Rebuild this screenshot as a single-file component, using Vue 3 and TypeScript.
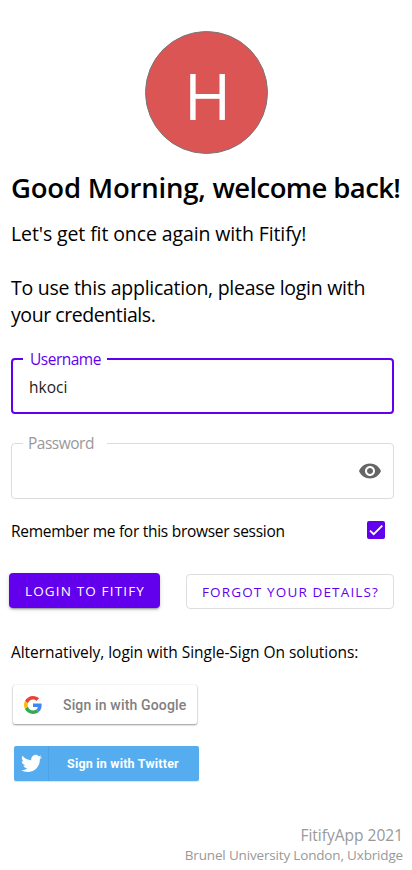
<script setup lang="ts">
import { ref } from 'vue'

const username = ref('hkoci')
const password = ref('')
const remember = ref(true)
const showPassword = ref(false)
</script>

<template>
  <main class="page">
    <div class="avatar"><span>H</span></div>
    <h1><span class="greeting">Good Morning, </span><span class="welcome">welcome back!</span></h1>
    <p class="intro first">Let's get fit once again with Fitify!</p>
    <p class="intro second"><span class="line-a">To use this application, please login with</span><br /><span class="line-b">your credentials.</span></p>

    <label class="field active">
      <span class="notch"><span>Username</span></span>
      <input v-model="username" type="text" spellcheck="false" />
    </label>

    <label class="field">
      <span class="notch"><span>Password</span></span>
      <input v-model="password" :type="showPassword ? 'text' : 'password'" />
      <svg class="eye" viewBox="0 0 24 24" @click.prevent="showPassword = !showPassword">
        <path d="M12 4.5C7 4.5 2.73 7.61 1 12c1.73 4.39 6 7.5 11 7.5s9.27-3.11 11-7.5c-1.73-4.39-6-7.5-11-7.5zM12 17c-2.76 0-5-2.24-5-5s2.24-5 5-5 5 2.24 5 5-2.24 5-5 5zm0-8c-1.66 0-3 1.34-3 3s1.34 3 3 3 3-1.34 3-3-1.34-3-3-3z" />
      </svg>
    </label>

    <div class="remember">
      <span>Remember me for this browser session</span>
      <button class="check" type="button" role="checkbox" :aria-checked="remember" @click="remember = !remember">
        <svg v-if="remember" viewBox="0 0 24 24"><path d="M1.73 12.91 8.1 19.28 22.79 4.59" /></svg>
      </button>
    </div>

    <div class="actions">
      <button class="login" type="button"><span>LOGIN TO FITIFY</span></button>
      <button class="forgot" type="button"><span>FORGOT YOUR DETAILS?</span></button>
    </div>

    <p class="alt">Alternatively, login with Single-Sign On solutions:</p>

    <button class="google" type="button">
      <svg viewBox="0 0 48 48">
        <path fill="#EA4335" d="M24 9.5c3.54 0 6.71 1.22 9.21 3.6l6.85-6.85C35.9 2.38 30.47 0 24 0 14.62 0 6.51 5.38 2.56 13.22l7.98 6.19C12.43 13.72 17.74 9.5 24 9.5z" />
        <path fill="#4285F4" d="M46.98 24.55c0-1.57-.15-3.09-.38-4.55H24v9.02h12.94c-.58 2.96-2.26 5.48-4.78 7.18l7.73 6c4.51-4.18 7.09-10.36 7.09-17.65z" />
        <path fill="#FBBC05" d="M10.53 28.59c-.48-1.45-.76-2.99-.76-4.59s.27-3.14.76-4.59l-7.98-6.19C.92 16.46 0 20.12 0 24c0 3.88.92 7.54 2.56 10.78l7.97-6.19z" />
        <path fill="#34A853" d="M24 48c6.48 0 11.93-2.13 15.89-5.81l-7.73-6c-2.15 1.45-4.92 2.3-8.16 2.3-6.26 0-11.57-4.22-13.47-9.91l-7.98 6.19C6.51 42.62 14.62 48 24 48z" />
      </svg>
      <span>Sign in with Google</span>
    </button>

    <button class="twitter" type="button">
      <i>
        <svg viewBox="0 0 24 24"><path d="M23.953 4.57a10 10 0 01-2.825.775 4.958 4.958 0 002.163-2.723c-.951.555-2.005.959-3.127 1.184a4.92 4.92 0 00-8.384 4.482C7.69 8.095 4.067 6.13 1.64 3.162a4.822 4.822 0 00-.666 2.475c0 1.71.87 3.213 2.188 4.096a4.904 4.904 0 01-2.228-.616v.06a4.923 4.923 0 003.946 4.827 4.996 4.996 0 01-2.212.085 4.936 4.936 0 004.604 3.417 9.867 9.867 0 01-6.102 2.105c-.39 0-.779-.023-1.17-.067a13.995 13.995 0 007.557 2.209c9.053 0 13.998-7.496 13.998-13.985 0-.21 0-.42-.015-.63A9.935 9.935 0 0024 4.59z" /></svg>
      </i>
      <span>Sign in with Twitter</span>
    </button>

    <footer>
      <div class="app-name"><span>FitifyApp 2021</span></div>
      <div class="place"><span>Brunel University London, Uxbridge</span></div>
    </footer>
  </main>
</template>

<style>
body {
  background: #fff;
}
</style>

<style scoped>
.page {
  box-sizing: border-box;
  height: 870px;
  padding: 31px 0 0 11px;
  display: flex;
  flex-direction: column;
  align-items: flex-start;
  overflow: hidden;
  white-space: nowrap;
  color: #000;
  font-family: "Open Sans", "Noto Sans", sans-serif;
}
button,
input {
  font: inherit;
  padding: 0;
  margin: 0;
  border: 0;
  background: none;
  outline: none;
}
p,
h1 {
  margin: 0;
}
.avatar {
  box-sizing: border-box;
  width: 123px;
  height: 123px;
  margin-left: 134px;
  padding-left: 2px;
  border: 1px solid #777;
  border-radius: 50%;
  background: #db5555;
  color: #fff;
  display: flex;
  justify-content: center;
  font-size: 64px;
  font-weight: 400;
  line-height: 128px;
}
h1 {
  margin-top: 16px;
  font-size: 27.5px;
  font-weight: 600;
  line-height: 36px;
  white-space: pre;
}
.greeting {
  letter-spacing: -0.2px;
}
.welcome {
  letter-spacing: -0.6px;
}
.intro {
  font-size: 19.5px;
  line-height: 27px;
}
.first {
  margin-top: 14px;
  letter-spacing: -0.11px;
}
.second {
  margin-top: 27px;
}
.line-a {
  letter-spacing: -0.27px;
}
.line-b {
  letter-spacing: -0.43px;
}
.field {
  position: relative;
  box-sizing: border-box;
  width: 383px;
  height: 56px;
  margin-top: 29px;
  padding: 0 11px 0 17px;
  border: 1px solid #dcdcdc;
  border-radius: 4px;
  display: flex;
  align-items: center;
  color: #999;
  font-size: 15.5px;
}
.active {
  margin-top: 30px;
  padding-left: 16px;
  border: 2px solid #6200ee;
  color: #6200ee;
}
.notch {
  position: absolute;
  top: -12px;
  left: 11px;
  box-sizing: border-box;
  width: 84px;
  padding-left: 5px;
  background: #fff;
  line-height: 23px;
  letter-spacing: -0.5px;
}
.active .notch {
  left: 10px;
  padding-left: 7px;
}
.field input {
  flex: 1;
  min-width: 0;
  height: 24px;
  margin-top: 1px;
  color: #222;
}
.eye {
  width: 24px;
  height: 24px;
  fill: #666;
}
.remember {
  width: 374px;
  margin-top: 20px;
  display: flex;
  justify-content: space-between;
  align-items: center;
  font-size: 15.5px;
  line-height: 24px;
  letter-spacing: -0.28px;
}
.check {
  width: 18px;
  height: 18px;
  margin-bottom: 2px;
  border-radius: 2px;
  background: #6200ee;
  display: flex;
  align-items: center;
  justify-content: center;
}
.check svg {
  width: 14px;
  height: 14px;
  fill: none;
  stroke: #fff;
  stroke-width: 3.12;
}
.actions {
  margin: 30px 0 0 -2px;
  display: flex;
  gap: 26px;
  font-size: 13.5px;
}
.login {
  width: 151px;
  height: 35px;
  padding: 0 0 0 1px;
  border-radius: 4px;
  background: #6200ee;
  color: #fff;
  box-shadow: 0 3px 1px -2px rgba(0, 0, 0, 0.2), 0 2px 2px rgba(0, 0, 0, 0.14), 0 1px 5px rgba(0, 0, 0, 0.12);
  letter-spacing: 1.15px;
}
.forgot {
  width: 208px;
  height: 35px;
  margin-top: 1px;
  padding-left: 1px;
  border: 1px solid #dedede;
  border-radius: 4px;
  color: #6200ee;
  letter-spacing: 1.15px;
}
.alt {
  margin-top: 31px;
  font-size: 15.5px;
  line-height: 24px;
  letter-spacing: -0.05px;
}
.google {
  width: 184px;
  height: 39px;
  margin: 21px 0 0 2px;
  border-radius: 2px;
  background: #fff;
  box-shadow: 0 1px 2px rgba(0, 0, 0, 0.4), 0 0 1px rgba(0, 0, 0, 0.2);
  display: flex;
  align-items: center;
  color: #808080;
  font-family: Roboto, sans-serif;
  font-size: 14px;
  font-weight: 500;
  letter-spacing: 0.16px;
}
.google svg {
  width: 18px;
  height: 18px;
  margin: 0 21px 0 11px;
}
.twitter {
  width: 185px;
  height: 35px;
  margin: 22px 0 0 3px;
  border-radius: 2px;
  background: #55acee;
  box-shadow: 0 1px 1px rgba(0, 0, 0, 0.12);
  display: flex;
  align-items: center;
  color: #fff;
  font-family: Roboto, sans-serif;
  font-size: 12.5px;
  font-weight: 700;
  letter-spacing: 0.2px;
}
.twitter i {
  width: 34px;
  height: 35px;
  margin-right: 18px;
  border-right: 1px solid #4ea2e2;
  display: flex;
  align-items: center;
  justify-content: center;
}
.twitter svg {
  width: 21px;
  height: 21px;
  fill: #fff;
}
footer {
  width: 392px;
  margin-top: 44px;
  color: #999;
  text-align: right;
}
.app-name {
  font-size: 15.5px;
  line-height: 20px;
}
.place {
  font-size: 13.5px;
  line-height: 20px;
  letter-spacing: -0.17px;
}
</style>
